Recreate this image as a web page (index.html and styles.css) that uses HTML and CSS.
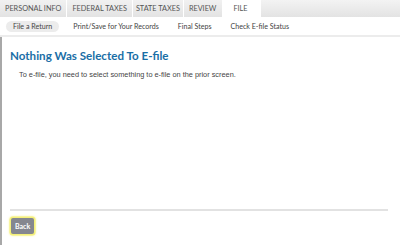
FILE: index.html
```html
<!DOCTYPE html>
<html>
<head>
<meta charset="utf-8">
<link rel="stylesheet" href="styles.css">
</head>
<body>
<div class="page">
  <nav class="tabs">
    <div class="tab">PERSONAL INFO</div>
    <div class="tab">FEDERAL TAXES</div>
    <div class="tab">STATE TAXES</div>
    <div class="tab">REVIEW</div>
    <div class="tab active">FILE</div>
    <div class="tab-fill"></div>
  </nav>
  <nav class="subtabs">
    <div class="sub active">File a Return</div>
    <div class="sub">Print/Save for Your Records</div>
    <div class="sub">Final Steps</div>
    <div class="sub">Check E-file Status</div>
  </nav>
  <main class="content">
    <h1 class="title">Nothing Was Selected To E-file</h1>
    <p class="msg">To e-file, you need to select something to e-file on the prior screen.</p>
    <div class="spacer"></div>
    <div class="footer">
      <button class="back">Back</button>
    </div>
  </main>
</div>
</body>
</html>
```
FILE: styles.css
```css
html, body { margin: 0; padding: 0; background: #fff; }
body { width: 400px; height: 245px; overflow: hidden; }
.page { display: flex; flex-direction: column; height: 245px; }
.tabs {
  display: flex; height: 17px; gap: 1px; background: #fff;
}
.tab {
  font-family: Lato, sans-serif; font-size: 7.3px; color: #555;
  background: linear-gradient(#f1f1f1, #e3e3e3);
  display: flex; align-items: center; padding: 0 5px;
}
.tab:nth-child(3) { padding: 0 3px; }
.tab:nth-child(4) { padding: 0 6px 0 5px; }
.tab.active { background: #fff; padding: 0 12px 0 10px; }
.tab-fill { flex: 1; background: linear-gradient(#f3f3f3, #e3e3e3); }
.subtabs {
  display: flex; align-items: center; height: 18px; gap: 19px; padding-left: 6px;
  border-bottom: 2px solid #ececec;
}
.sub { font-family: Lato, sans-serif; font-size: 7.1px; color: #444; }
.sub.active { background: #ececec; border-radius: 6px; padding: 1px 7px; margin-right: -5px; }
.content {
  flex: 1; display: flex; flex-direction: column;
  border-left: 2px solid #a8a8a8; padding: 0 12px 0 8px;
}
.title {
  font-family: Lato, sans-serif; font-weight: 700; font-size: 11.6px; color: #1a6ea6;
  margin: 12px 0 0 0; letter-spacing: 0;
}
.msg {
  font-family: "Liberation Sans", Arial, sans-serif; font-size: 7.35px; color: #444;
  margin: 8px 0 0 9px;
}
.spacer { flex: 1; }
.footer { border-top: 2px solid #e2e2e2; padding: 4px 0 11px 1px; margin-bottom: 0; }
.back {
  font-family: Lato, sans-serif; font-weight: 700; font-size: 7px; color: #fff;
  background: #85878f; border: 0; border-radius: 2px; height: 16px; padding: 0 4px;
  box-shadow: 0 0 0 1.5px #f4f07a, 0 0 2px 2px #fbf7b0;
}
```
